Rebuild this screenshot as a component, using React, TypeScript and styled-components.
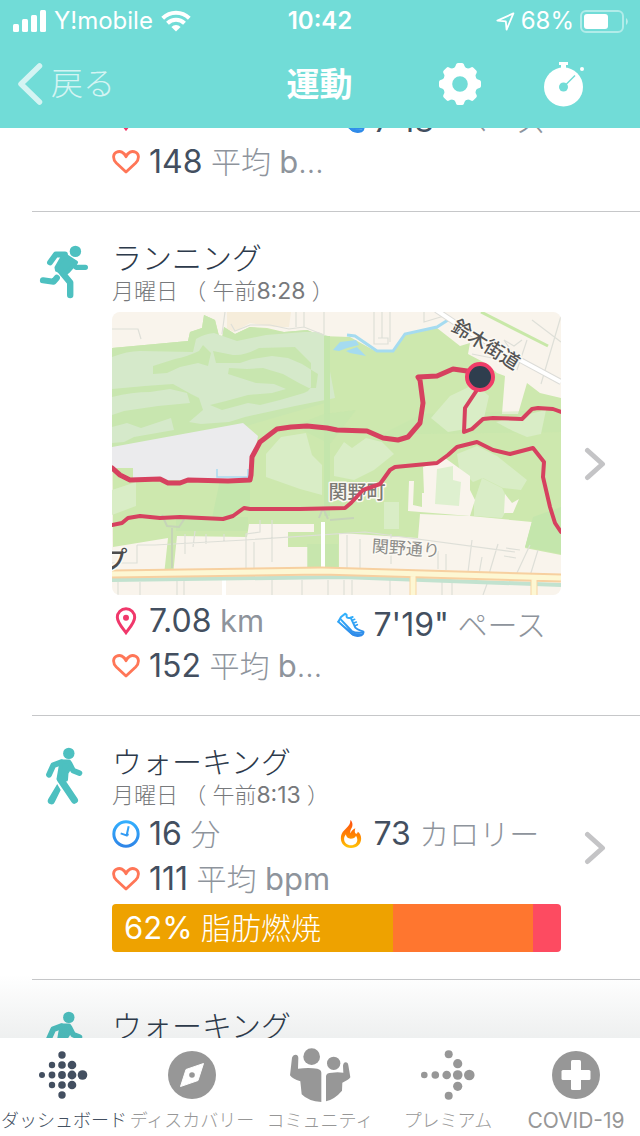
import React from "react";
import styled, { createGlobalStyle, css } from "styled-components";

const GlobalStyle = createGlobalStyle`
  * {
    box-sizing: border-box;
  }

  body {
    margin: 0;
    background: #fff;
    font-family: Inter, "Noto Sans CJK JP", sans-serif;
    color: #2d3a4b;
  }

  button {
    border: 0;
    padding: 0;
    background: none;
    color: inherit;
    font: inherit;
    cursor: pointer;
  }

  svg {
    display: block;
    flex-shrink: 0;
  }
`;

const Screen = styled.div`
  height: 100vh;
  display: flex;
  flex-direction: column;
  overflow: hidden;
`;

/* ---------- header ---------- */

const Header = styled.header`
  background: #71dcd7;
  color: #fff;
  flex-shrink: 0;
  position: relative;
  z-index: 1;
`;

const StatusBar = styled.div`
  height: 40px;
  padding: 0 12px;
  display: grid;
  grid-template-columns: 1fr auto 1fr;
  align-items: center;
  font-size: 24px;
  line-height: 42px;
`;

const StatusSide = styled.div<{ $end?: boolean }>`
  display: flex;
  align-items: center;
  gap: ${({ $end }) => ($end ? 6 : 8)}px;
  justify-content: ${({ $end }) => ($end ? "flex-end" : "flex-start")};
`;

const Clock = styled.time`
  font-weight: 600;
`;

const NavBar = styled.nav`
  height: 88px;
  padding: 0 55px 0 18px;
  display: grid;
  grid-template-columns: 1fr auto 1fr;
  align-items: center;
`;

const BackButton = styled.button`
  justify-self: start;
  display: flex;
  align-items: center;
  gap: 8px;
  font-size: 32px;
  font-weight: 300;
  line-height: 48px;
  opacity: 0.7;
`;

const NavTitle = styled.h1`
  margin: 0 0 0 36px;
  font-size: 33px;
  line-height: 48px;
  font-weight: 700;
`;

const NavActions = styled.div`
  display: flex;
  align-items: center;
  justify-content: flex-end;
  gap: 63px;
`;

/* ---------- exercise list ---------- */

const ListViewport = styled.main`
  flex: 1;
  min-height: 0;
  overflow: hidden;
  position: relative;

  &::after {
    content: "";
    position: absolute;
    left: 0;
    right: 0;
    bottom: 0;
    height: 64px;
    background: linear-gradient(rgba(40, 60, 60, 0), rgba(40, 60, 60, 0.08));
    pointer-events: none;
  }
`;

const List = styled.ul`
  list-style: none;
  margin: -33px 0 0;
  padding: 0 0 0 32px;
`;

const Item = styled.li<{ $continued?: boolean }>`
  display: grid;
  grid-template-columns: 80px 1fr 79px;
  padding: ${({ $continued }) => ($continued ? 0 : 28)}px 0 27px;
  border-bottom: 1px solid #c6c7c9;
  position: relative;
`;

const ItemBody = styled.div`
  grid-column: 2;
  min-width: 0;
`;

const ItemTitle = styled.h2`
  margin: 0;
  font-size: 30px;
  line-height: 36px;
  font-weight: 300;
  color: #2d3a4b;
`;

const ItemTime = styled.p`
  margin: 0;
  font-size: 22px;
  line-height: 30px;
  font-weight: 300;
  color: #77797c;
`;

/* digits and roman letters sit a step larger than the kana around them */
const Latin = styled.span<{ $size: number }>`
  font-size: ${({ $size }) => $size}px;
  font-weight: 400;
`;

const MapCard = styled.div`
  margin: 6px 0 4px;
  border-radius: 8px;
  overflow: hidden;

  svg {
    width: 100%;
    height: auto;
  }
`;

const Metrics = styled.div<{ $gap?: number }>`
  display: grid;
  grid-template-columns: 1fr 1fr;
  row-gap: 1px;
  margin-top: ${({ $gap = 2 }) => $gap}px;
`;

const MetricBox = styled.div<{ $low?: boolean }>`
  height: 44px;
  display: flex;
  align-items: center;
  gap: 9px;
  min-width: 0;
  ${({ $low }) =>
    $low &&
    css`
      padding-top: 8px;
    `}
`;

const MetricIcon = styled.span`
  width: 28px;
  flex-shrink: 0;
  display: flex;
  justify-content: center;
`;

const MetricText = styled.span`
  font-size: 30px;
  font-weight: 300;
  line-height: 44px;
  color: #8e949c;
  white-space: nowrap;
  overflow: hidden;
  text-overflow: ellipsis;
`;

const Value = styled.span`
  font-size: 32px;
  font-weight: 400;
  color: #434f60;
`;

const ZoneBar = styled.div`
  height: 48px;
  margin-top: 3px;
  display: flex;
  border-radius: 4px;
  overflow: hidden;
`;

const Zone = styled.div<{ $color: string }>`
  background: ${({ $color }) => $color};
`;

const ZoneLabel = styled.span`
  display: block;
  padding-left: 12px;
  color: #fff;
  font-size: 30px;
  line-height: 48px;
  font-weight: 300;
  white-space: nowrap;
`;

const DetailButton = styled.button`
  position: absolute;
  top: 0;
  bottom: 0;
  right: 34px;
  display: flex;
  align-items: center;
`;

/* ---------- tab bar ---------- */

const TabBar = styled.nav`
  height: 98px;
  flex-shrink: 0;
  display: grid;
  grid-template-columns: repeat(5, 1fr);
  background: #fff;
`;

const Tab = styled.button<{ $active?: boolean }>`
  padding-top: 5px;
  display: flex;
  flex-direction: column;
  align-items: center;
  color: ${({ $active }) => ($active ? "#434f60" : "#979797")};
`;

const TabLabel = styled.span`
  font-size: 18px;
  line-height: 28px;
  font-weight: 300;
  white-space: nowrap;
`;

/* ---------- icons ---------- */

const SignalIcon = () => (
  <svg width="34" height="22" viewBox="0 0 34 22" fill="#fff">
    <rect x="1" y="14" width="6" height="8" rx="1.5" />
    <rect x="10" y="9" width="6" height="13" rx="1.5" />
    <rect x="19" y="5" width="6" height="17" rx="1.5" />
    <rect x="28" y="0" width="6" height="22" rx="1.5" />
  </svg>
);

const WifiIcon = () => (
  <svg width="30" height="22" viewBox="0 0 30 22" fill="none" stroke="#fff" strokeWidth="4">
    <path d="M1.7 8.2a19 19 0 0 1 26.6 0" />
    <path d="M6.5 13.2a12.2 12.2 0 0 1 17 0" />
    <path d="M15 21.6l-4.6-4.7a6.6 6.6 0 0 1 9.2 0z" fill="#fff" stroke="none" />
  </svg>
);

const LocationIcon = () => (
  <svg width="19" height="19" viewBox="0 0 19 19" fill="none" stroke="#fff" strokeWidth="1.8" strokeLinejoin="round">
    <path d="M17.4 1.4L1.4 8.6l8.4.8.8 8.2z" />
  </svg>
);

const BatteryIcon = () => (
  <svg width="48" height="23" viewBox="0 0 48 23">
    <rect x="1" y="1" width="42" height="21" rx="5" fill="none" stroke="#fff" strokeOpacity="0.45" strokeWidth="2" />
    <rect x="4" y="4" width="24" height="15" rx="3" fill="#fff" />
    <path d="M46 8c2.4 1.4 2.4 5.6 0 7z" fill="#fff" fillOpacity="0.5" />
  </svg>
);

const BackIcon = () => (
  <svg width="25" height="42" viewBox="0 0 25 42" fill="none" stroke="#fff" strokeWidth="5.5" strokeLinecap="round" strokeLinejoin="round">
    <path d="M21.5 3L3 21l18.5 18" />
  </svg>
);

const GearIcon = () => (
  <svg width="42" height="42" viewBox="-21 -21 42 42" fill="#fff">
    <circle r="12.3" fill="none" stroke="#fff" strokeWidth="9" />
    {[0, 45, 90, 135, 180, 225, 270, 315].map((angle) => (
      <path
        key={angle}
        transform={`rotate(${angle})`}
        d="M-8 -15C-5.5 -16 -4.5 -17 -4 -19.5Q-3.5 -21 -2 -21H2Q3.5 -21 4 -19.5C4.5 -17 5.5 -16 8 -15Z"
      />
    ))}
  </svg>
);

const StopwatchIcon = () => (
  <svg width="41" height="45" viewBox="0 0 41 45">
    <circle cx="19.5" cy="25" r="19.5" fill="#fff" />
    <path d="M15 0h9v3h-2v4h-5V3h-2z" fill="#fff" />
    <circle cx="38" cy="7" r="2" fill="#fff" />
    <circle cx="19.5" cy="25" r="4.5" fill="#71dcd7" />
    <path d="M20 24.5L31 13.5" stroke="#71dcd7" strokeWidth="1.5" />
  </svg>
);

const RunIcon = () => (
  <svg width="64" height="64" viewBox="0 0 64 64" fill="none" stroke="#4dc0c0" strokeWidth="6" strokeLinecap="round" strokeLinejoin="round">
    <circle cx="43.4" cy="11.4" r="5.7" fill="#4dc0c0" stroke="none" />
    <path d="M18 22.5l5.8-8H33" strokeWidth="5.8" />
    <path d="M37 20l7 7.3h9.4" strokeWidth="5.2" />
    <path d="M31 14L44 22.5 36.500 31l-3 2.500L25 30l-.5-2.500L30 18z" fill="#4dc0c0" strokeWidth="4" />
    <path d="M27 29l11.2 13.5V55" strokeWidth="6.4" />
    <path d="M11 40.300l10.500 1.400 3.300-3.800" strokeWidth="6.200" />
  </svg>
);

const WalkIcon = () => (
  <svg width="64" height="64" viewBox="0 0 64 64" fill="none" stroke="#4dc0c0" strokeWidth="6.800" strokeLinecap="round" strokeLinejoin="round">
    <circle cx="36.8" cy="9.4" r="5.7" fill="#4dc0c0" stroke="none" />
    <path d="M17 30.8l4.300-9.600 8-2.900" strokeWidth="5.800" />
    <path d="M37.5 19.500l3.700 7.200 6.300 2.400" strokeWidth="5.600" />
    <path d="M29.500 17.500h7.500l1.500 5-4 6.500-.5 6.500-7.500-.5z" fill="#4dc0c0" strokeWidth="4" />
    <path d="M28.500 35.500l14 20.700" strokeWidth="7" />
    <path d="M25.200 40l3.500 6-6 12.200a3.600 3.600 0 0 1-6.600-3z" fill="#4dc0c0" stroke="none" />
  </svg>
);

const HeartIcon = () => (
  <svg width="28" height="24" viewBox="0 0 84 72" fill="none" stroke="#ff7657" strokeWidth="8.5" strokeLinejoin="round">
    <path d="M42 66L13 39C1 27 3 12 13 7c12-6 23 0 29 13C48 7 59 1 71 7c10 5 12 20 0 32z" />
  </svg>
);

const PinIcon = () => (
  <svg width="22" height="28" viewBox="0 0 64 84">
    <path d="M32 77C24 66 6 48 6 31a26 26 0 0 1 52 0c0 17-18 35-26 46z" fill="none" stroke="#f0386b" strokeWidth="9" />
    <circle cx="32" cy="32" r="9" fill="#f0386b" />
  </svg>
);

const TimeIcon = () => (
  <svg width="28" height="28" viewBox="0 0 84 84" fill="none" stroke="url(#timeBlue)" strokeWidth="9">
    <defs>
      <linearGradient id="timeBlue" gradientUnits="userSpaceOnUse" x1="0" y1="0" x2="0" y2="84">
        <stop offset="0" stopColor="#33b1ff" />
        <stop offset="1" stopColor="#2e83e6" />
      </linearGradient>
    </defs>
    <circle cx="42" cy="42" r="36.5" />
    <path d="M50 19L44 46 26 40M42 42l8 2" strokeWidth="6" />
  </svg>
);

const FlameIcon = () => (
  <svg width="22" height="28" viewBox="0 0 64 84">
    <defs>
      <linearGradient id="flame" x1="0" y1="0" x2="0" y2="1">
        <stop offset="0" stopColor="#ff4e12" />
        <stop offset="0.6" stopColor="#ff8a00" />
        <stop offset="1" stopColor="#ffc60a" />
      </linearGradient>
    </defs>
    <path
      fill="url(#flame)"
      fillRule="evenodd"
      d="M30 0C32 18 12 26 4 42-4 62 8 84 32 84s36-20 28-40c-2-5-5-8-8-9 0 4-2 6-5 6-5-2-4-10-2-16-8 3-13 9-14 15-3-5 0-11 4-18 3-8 1-18-5-22zM17 43c0 8 7 13 14 13 8 0 14-4 16-9 9 14 2 29-15 29S4 58 17 43z"
    />
  </svg>
);

const ShoeIcon = () => (
  <svg width="28" height="26" viewBox="0 0 84 76" fill="none" stroke="url(#shoeBlue)" strokeWidth="6" strokeLinejoin="round" strokeLinecap="round">
    <defs>
      <linearGradient id="shoeBlue" gradientUnits="userSpaceOnUse" x1="0" y1="0" x2="0" y2="76">
        <stop offset="0" stopColor="#33b6ff" />
        <stop offset="1" stopColor="#2f86e6" />
      </linearGradient>
    </defs>
    <path d="M4 28L12 14 25 4l4 4c-2 8 3 10 12 8l6-2" />
    <path d="M41 16l14 30c8 8 16 8 24 12 2 6-1 8-6 11-12 4-22 2-30-6L4 28" />
    <path d="M12 22l32 34c8 6 22 6 32 5" />
    <path d="M46 24l7-3M50 32l8-3M54 40l7-3" strokeWidth="5" />
    <path d="M9 34l36 34c9 4 22 4 30-2L50 61z" fill="url(#shoeBlue)" strokeWidth="2" />
  </svg>
);

const ChevronIcon = () => (
  <svg width="22" height="34" viewBox="0 0 22 34" fill="none" stroke="#c4c4c6" strokeWidth="5" strokeLinecap="round" strokeLinejoin="round">
    <path d="M3.5 3.5L18.5 17 3.5 30.5" />
  </svg>
);

type Dot = [number, number, number];

const dashboardDots: Dot[] = [
  [30, 12, 3.7],
  [20, 22, 3.2], [30, 22, 3.8], [40, 22, 4.3],
  [10, 32, 3], [20, 32, 3.4], [30, 32, 3.9], [40, 32, 4.4], [50.5, 32, 4.8],
  [20, 42, 3.2], [30, 42, 3.8], [40, 42, 4.3],
  [30, 52, 3.7],
];

const premiumDots: Dot[] = [
  [32.7, 11.3, 4],
  [41.7, 20.7, 4.6],
  [8.3, 32, 3.3], [19.3, 32, 3.8], [30.7, 32, 4.3], [41.7, 32, 4.8], [53.3, 32, 5.3],
  [41.7, 43.3, 4.6],
  [32.7, 52.7, 4],
];

const DotsIcon = ({ dots }: { dots: Dot[] }) => (
  <svg width="64" height="64" viewBox="0 0 64 64" fill="currentColor">
    {dots.map(([x, y, r]) => (
      <circle key={`${x}-${y}`} cx={x} cy={y} r={r} />
    ))}
  </svg>
);

const CompassIcon = () => (
  <svg width="64" height="64" viewBox="-32 -32 64 64" fill="currentColor">
    <circle r="24" />
    <path d="M11.5-11.5L6 5.5-11.5 11.5-6-5.5z" fill="#fff" stroke="#fff" strokeLinejoin="round" />
    <circle r="2.8" />
  </svg>
);

const CommunityIcon = () => (
  <svg width="64" height="64" viewBox="24 9 192 192" fill="currentColor">
    <circle cx="95" cy="50" r="25" />
    <circle cx="161" cy="70" r="20" />
    <path d="M30 106L36 53Q39 44 47 44 55 45 55 54L54 86Q86 82 112 86 124 89 124 98V186Q85 184 65 163L61 124Q37 117 30 106z" />
    <path d="M138 184V108Q139 98 156 98 172 96 190 98L189 77Q191 67 197 67 204 67 205 76L211 112Q205 121 187 128L186 152Q165 177 138 184z" />
  </svg>
);

const CrossIcon = () => (
  <svg width="64" height="64" viewBox="-32 -32 64 64" fill="currentColor">
    <circle r="24" />
    <rect x="-5" y="-15" width="10" height="30" rx="1.5" fill="#fff" />
    <rect x="-14.5" y="-5" width="29" height="10" rx="1.5" fill="#fff" />
  </svg>
);

/* ---------- route map ---------- */

const MapLabel = styled.text`
  font-family: "Noto Sans CJK JP", sans-serif;
  text-anchor: middle;
  dominant-baseline: central;
  paint-order: stroke;
  stroke: #fbf9f3;
  stroke-width: 3px;
  stroke-linejoin: round;
`;

const RouteMap = () => (
  <svg viewBox="0 0 449 283" role="img" aria-label="ルート">
    <rect width="449" height="283" fill="#f9f4ec" />
    <path d="M115 0h64l-2 15-15 0-24-4-16 9-7-3z" fill="#f6eddb" />

    {/* park */}
    <path
      fill="#cde8ae"
      d="M0 36l76-7 2-9 12-4 2-13 11 5 4 16 3 2 2-11 11 7 15-7 17 1 17 4 23-2 14 6 29 1 27 15h16l12-17 32-7 23 18 10-3-2 11 19 10 10 9 8 3-3 38h16l9-31 13 10 21 5v157l-36-7 7-26-62-6-50-2-2 24-79-5v38h-31v-24h-20v-15h26v-8h-65l-2 13-70-1-4 39h-9l4-37-55 9z"
    />
    <path fill="#c8e6af" d="M0 36l76-7 2-9 12-4 2-13 11 5 4 16 3 3 2-12 11 7 15-7 34 5 23-2 18 7v66l-82 24-131 22z" />

    {/* fairways */}
    <g fill="#d5e9ca">
      <path d="M0 45q15-6 28-6l53 1 3-13q8-5 18-6l23 8 29-6 38-3h14l10 4 2 10-1 20 6 32-40 8-50 11-16 5-28 2-12-2 14-12-4-12-8-4-18-10-28 2-33 3z" />
      <path d="M0 85q20-5 38-5l20-3 17 4 3 10-32 3-34 5-12 4z" />
      <path d="M0 115l15-4 14 5 30-10 3 12-40 7-10 5-12 1z" />
    </g>
    <g fill="#c8e6af">
      <path d="M41 54l22-7q14-3 24-8l4-6 8 8-3 13-10-3-18 4-13 6-14 1z" />
      <path d="M101 39l20 4q12 1 26-7l36-1 16 16v24l-3 4-4 2-24 7-20 5-12-2-26 7-12-5 16-4 22-6 24-2 14-4-12-5-18-1-28-9 1-6 18 1 16-1 20 6 16 9 10 5 7 0 2-14-16-10-14-6-16-2-20 3-12 4-24 0z" />
    </g>

    {/* shaded woods */}
    <g fill="#c4e6ac">
      <path d="M212 24h6v180h-6zM108 168h30v26l-22 12-16 0z" />
      <path d="M64 205h72v14H64zM195 232h31v25h-31z" opacity=".7" />
      <path d="M449 120L300 122l-50 10 60-30 139-4z" opacity=".4" />
      <path d="M413 235l8-30 28-10v47z" />
      <path d="M212 102l-30 12 36 18 26-34z" opacity=".6" />
    </g>

    {/* meadows */}
    <g fill="#d9edc6">
      <path d="M154 142l15-17 25-4 6 22 10 10v30l-22-6-34-12z" />
      <path d="M222 145l10-15 8 6 14-10 16 4 12 12-20 16-20 10-20-4z" />
      <path d="M338 84l25-12 14 12-5 22-12 10-24 4-17-14z" />
      <path d="M384 110l50-12-5 24-14 3-14-6z" />
      <path d="M345 142l20-8 20 10 30 24-6 10-18-2-20-10-10 4-14-14zM272 190h15v27h-15z" />
      <path d="M362 204l0-14 8-24 20 10 8 16-8 14z" />
      <path d="M0 178l24-8v24L0 203z" />
    </g>

    {/* built-up area beside the park */}
    <path d="M0 135l131-24 15 13-8 44H21v-12H0z" fill="#ebebed" />
    <path d="M105 157v8h31v-8" fill="none" stroke="#a9daef" strokeWidth="1.5" />
    <path d="M311 155l22-9 25 18v14l5 10-5 16-62-5 1-30h5l-1 24 9 2v-14h2z" fill="#f9f4ec" />
    <path d="M325 157l16-3v14l8 2-2 24-24-2z" fill="#def0cf" />
    <path d="M393 182l7 9 7-4-6 14h-9z" fill="#f9f4ec" />

    {/* minor streets */}
    <g fill="none" stroke="#dedfd8" strokeWidth="1.2">
      <path d="M0 17h26l3 10M113 0l-3 22M119 12l4 7 15-6h20l19 4 15-2 20 8M184 0v15M192 0v15M212 0v22M262 0v32h14v-6h-10M270 0v26M278 0v30" />
      <path d="M312 0v10l20-6M400 40l-8-12 10 6 8-6M415 28l-10 30M449 4l-20 68M420 8l29 22M380 46l-20-4" />
      <path d="M25 233h18l90-5 120-8 150 20M25 233v18H0M73 222v20M83 219l-2 16M94 222v10M112 222v8M148 208v12l-14 2v38M142 230v28M160 208v42M235 223v35M248 227v30M279 222v30M326 239v18M334 242v16M360 228l-4 32M386 232l-9 30M418 233l-14 30M426 238l-8 26M370 245l-3 17M394 236l14 2M392 244l12 2" />
      <path d="M6 270v13M28 270v13M65 268v15M72 268v15M160 268v15M190 268v15M216 268v15M232 268v15M240 268v15M278 268v15M330 270v13M340 270v13M375 272l-4 11" />
    </g>
    <path d="M50 203l5 11 12 1 6-9M60 216v40M207 206l4-10 5 11M218 208l24-2" fill="none" stroke="#c6d4b8" strokeWidth="2" />

    {/* water */}
    <g fill="#a5dbf0">
      <path d="M221 38l7-8 16-2 3 5-12 3-8 3zM234 39l11-4 9 9-16-3z" />
      <path d="M235 23l8 1 22 15h16l12-17 32-7 11-7" fill="none" stroke="#a5dbf0" strokeWidth="3" />
    </g>
    <path d="M369 0l67 34" stroke="#c8e8a8" strokeWidth="3" />

    {/* streets and trunk road */}
    <g fill="none">
      <path d="M324-2l36 24 89 48" stroke="#dcdcd8" strokeWidth="6" />
      <path d="M324-2l36 24 89 48M211 210v47M112 264v19" stroke="#fff" strokeWidth="4" />
      <path d="M0 268l230-3 219 8" stroke="#c2e2cf" strokeWidth="4" />
      <path d="M301 264v20M422 266v18" stroke="#f7d5a3" strokeWidth="7" />
      <path d="M0 262l210-3 239 7" stroke="#f7d0a0" strokeWidth="9" />
      <path d="M0 262l210-3 239 7M301 264v20M422 266v18" stroke="#fdf7d3" strokeWidth="5" />
    </g>

    <MapLabel fontSize="19" fontWeight="500" fill="#555" transform="translate(375 31) rotate(32)">鈴木街道</MapLabel>
    <MapLabel fontSize="19" fontWeight="500" fill="#7c7a74" x="245" y="178">関野町</MapLabel>
    <MapLabel fontSize="17" fill="#8b8b88" transform="translate(294 235) rotate(4)">関野通り</MapLabel>
    <MapLabel fontSize="25" fontWeight="500" fill="#4c4c4c" x="3" y="246">プ</MapLabel>

    {/* recorded track */}
    <g fill="none" stroke="#d6415f" strokeWidth="4" strokeLinecap="round" strokeLinejoin="round">
      <path
        strokeWidth="5"
        d="M0 156l8 7 10 5 30-1 8 4h12l8-3 40 1 22-1 1-5 1-18 8-15 17-13 14-2 16-1 20 2 10 2 30 1 16 7 15 2 10-3 12-14 3-20-3-23-2-3 19-1 16-7 14 2 13 6"
      />
      <path d="M368 65l-3 13-12 18-1 24 8-3 11-10 10-1 29 1 10-10 6-1 15 1 8 3" />
      <path d="M0 213l10-2 6-5 12-2 20 2 20-1 43 2 10-3 11-8 6 1h50l45-1 6-5 12-13 17-6 10-14 5-3 42-4 11-8 9-8 20-5 16 8 17 4 23-6 11 14-1 15 7 30 5 16 6 9" />
    </g>
    <circle cx="368" cy="65" r="13" fill="#2f3e4e" stroke="#ef3d68" strokeWidth="4" />
  </svg>
);

/* ---------- app ---------- */

const Mixed = ({ text, size }: { text: string; size: number }) => (
  <>
    {text.split(/([A-Za-z0-9:%-]+)/).map((part, i) =>
      i % 2 ? (
        <Latin key={i} $size={size}>
          {part}
        </Latin>
      ) : (
        part
      )
    )}
  </>
);

interface MetricProps {
  icon: React.ReactNode;
  value: string;
  unit: string;
  low?: boolean;
}

const Metric: React.FC<MetricProps> = ({ icon, value, unit, low }) => (
  <MetricBox $low={low}>
    <MetricIcon>{icon}</MetricIcon>
    <MetricText>
      <Value>{value}</Value> <Mixed text={unit} size={31} />
    </MetricText>
  </MetricBox>
);

const Details = () => (
  <DetailButton aria-label="詳細">
    <ChevronIcon />
  </DetailButton>
);

const zones = [
  { minutes: 281, color: "#eea200", label: "62% 脂肪燃焼" },
  { minutes: 140, color: "#ff762f" },
  { minutes: 28, color: "#fd4b61" },
];

const tabs = [
  { label: "ダッシュボード", icon: <DotsIcon dots={dashboardDots} />, active: true },
  { label: "ディスカバリー", icon: <CompassIcon /> },
  { label: "コミュニティ", icon: <CommunityIcon /> },
  { label: "プレミアム", icon: <DotsIcon dots={premiumDots} /> },
  { label: "COVID-19", icon: <CrossIcon /> },
];

const App = () => (
  <Screen>
    <GlobalStyle />
    <Header>
      <StatusBar>
        <StatusSide>
          <SignalIcon />
          <span>Y!mobile</span>
          <WifiIcon />
        </StatusSide>
        <Clock>10:42</Clock>
        <StatusSide $end>
          <LocationIcon />
          <span>68%</span>
          <BatteryIcon />
        </StatusSide>
      </StatusBar>
      <NavBar>
        <BackButton>
          <BackIcon />
          戻る
        </BackButton>
        <NavTitle>運動</NavTitle>
        <NavActions>
          <button aria-label="設定">
            <GearIcon />
          </button>
          <button aria-label="ストップウォッチ">
            <StopwatchIcon />
          </button>
        </NavActions>
      </NavBar>
    </Header>

    <ListViewport>
      <List>
        <Item $continued>
          <ItemBody>
            <Metrics $gap={0}>
              <Metric icon={<PinIcon />} value="6.17" unit="km" />
              <Metric icon={<ShoeIcon />} value={`7'18"`} unit="ペース" low />
              <Metric icon={<HeartIcon />} value="148" unit="平均 bpm" />
            </Metrics>
          </ItemBody>
        </Item>

        <Item>
          <RunIcon />
          <ItemBody>
            <ItemTitle>ランニング</ItemTitle>
            <ItemTime>
              <Mixed text="月曜日 （ 午前8:28 ）" size={23} />
            </ItemTime>
            <MapCard>
              <RouteMap />
            </MapCard>
            <Metrics>
              <Metric icon={<PinIcon />} value="7.08" unit="km" />
              <Metric icon={<ShoeIcon />} value={`7'19"`} unit="ペース" low />
              <Metric icon={<HeartIcon />} value="152" unit="平均 bpm" />
            </Metrics>
          </ItemBody>
          <Details />
        </Item>

        <Item>
          <WalkIcon />
          <ItemBody>
            <ItemTitle>ウォーキング</ItemTitle>
            <ItemTime>
              <Mixed text="月曜日 （ 午前8:13 ）" size={23} />
            </ItemTime>
            <Metrics>
              <Metric icon={<TimeIcon />} value="16" unit="分" />
              <Metric icon={<FlameIcon />} value="73" unit="カロリー" />
              <Metric icon={<HeartIcon />} value="111" unit="平均 bpm" />
            </Metrics>
            <ZoneBar>
              {zones.map(({ minutes, color, label }) => (
                <Zone key={color} $color={color} style={{ width: `${(minutes / 449) * 100}%` }}>
                  {label && (
                    <ZoneLabel>
                      <Mixed text={label} size={31} />
                    </ZoneLabel>
                  )}
                </Zone>
              ))}
            </ZoneBar>
          </ItemBody>
          <Details />
        </Item>

        <Item>
          <WalkIcon />
          <ItemBody>
            <ItemTitle>ウォーキング</ItemTitle>
          </ItemBody>
        </Item>
      </List>
    </ListViewport>

    <TabBar>
      {tabs.map(({ label, icon, active }) => (
        <Tab key={label} $active={active}>
          {icon}
          <TabLabel>
            <Mixed text={label} size={21} />
          </TabLabel>
        </Tab>
      ))}
    </TabBar>
  </Screen>
);

export default App;
